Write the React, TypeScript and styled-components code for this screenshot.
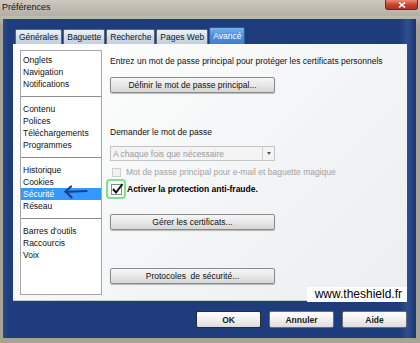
import React from 'react';
import styled, { createGlobalStyle } from 'styled-components';

const GlobalStyle = createGlobalStyle`
  html, body {
    margin: 0;
    padding: 0;
  }
  body {
    width: 420px;
    height: 343px;
    overflow: hidden;
    font-family: "Liberation Sans", Arial, sans-serif;
    font-size: 8px;
  }
`;

const Window = styled.div`
  width: 420px;
  height: 343px;
  display: flex;
  flex-direction: column;
  background: #a8a397;
`;

const TitleBar = styled.div`
  height: 16px;
  display: flex;
  justify-content: space-between;
  align-items: flex-start;
  background: linear-gradient(#cdc9c1, #b4afa5);
`;

const Title = styled.span`
  margin: 2px 0 0 2px;
  font-size: 9px;
  color: #111;
`;

const CloseButton = styled.div`
  width: 31px;
  height: 9px;
  margin-right: 2px;
  border: 1px solid #6b2b22;
  border-top: none;
  border-radius: 0 0 3px 3px;
  background: linear-gradient(#e88b78, #c7402b 55%, #b43322);
  display: flex;
  align-items: center;
  justify-content: center;
`;

const Frame = styled.div`
  flex: 1;
  display: flex;
  padding: 3px 4px 5px 3px;
  background: linear-gradient(#c0bcb3, #a8a397 10px);
`;

const Body = styled.div`
  flex: 1;
  display: flex;
  flex-direction: column;
  background: linear-gradient(90deg, #2a4a8c, #1f3d7c 6px, #1e3c7b 96%, #2d4f90 98%, #1a3470);
  padding: 8px 9px 0 10px;
`;

const Tabs = styled.div`
  display: flex;
  align-items: flex-end;
  gap: 1px;
  margin-left: 2px;
  height: 17px;
`;

const Tab = styled.div<{ $active?: boolean }>`
  height: ${({ $active }) => ($active ? '17px' : '15px')};
  padding: 0 ${({ $active }) => ($active ? '3px' : '3px')};
  box-sizing: border-box;
  display: flex;
  align-items: center;
  font-size: 8.5px;
  border: 1px solid ${({ $active }) => ($active ? '#2a5a9a' : '#55677d')};
  border-bottom: none;
  border-radius: 2px 2px 0 0;
  color: ${({ $active }) => ($active ? '#fff' : '#0c1a2e')};
  background: ${({ $active }) =>
    $active ? 'linear-gradient(#7ab2ec, #4a8fdb 50%, #3d7fcf)' : 'linear-gradient(#eef2f6, #d4dde7 50%, #c3cfdc)'};
`;

const Panel = styled.div`
  position: relative;
  height: 256px;
  display: flex;
  gap: 8px;
  padding: 6px 7px;
  box-sizing: border-box;
  background: linear-gradient(135deg, #ffffff, #f3f4f5 60%, #eceef0);
  box-shadow: 0 1px 0 #c8ccd2;
`;

const NavList = styled.div`
  position: relative;
  width: 82px;
  height: 245px;
  box-sizing: border-box;
  border: 1px solid #a7a7a7;
  background: #fff;
  padding-top: 3px;
`;

const NavItem = styled.div<{ $selected?: boolean }>`
  height: 12px;
  line-height: 12px;
  padding-left: 2px;
  font-size: 8.5px;
  color: ${({ $selected }) => ($selected ? '#fff' : '#111')};
  background: ${({ $selected }) => ($selected ? '#3399ff' : 'transparent')};
`;

const Separator = styled.div`
  height: 1px;
  margin: 6px 0;
  background: #8e8e8e;
`;

const Pointer = styled.svg`
  position: absolute;
  left: 43px;
  top: 134px;
`;

const Content = styled.div`
  display: flex;
  flex-direction: column;
  align-items: flex-start;
`;

const Text = styled.div<{ $top: number; $muted?: boolean }>`
  margin-top: ${({ $top }) => $top}px;
  height: 12px;
  line-height: 12px;
  font-size: 8.5px;
  color: ${({ $muted }) => ($muted ? '#9a9a9a' : '#111')};
`;

const Button = styled.div<{ $top: number }>`
  margin-top: ${({ $top }) => $top}px;
  width: 165px;
  height: 16px;
  box-sizing: border-box;
  display: flex;
  align-items: center;
  justify-content: center;
  font-size: 8.5px;
  color: #111;
  border: 1px solid #8a8a8a;
  border-radius: 2px;
  background: linear-gradient(#f6f6f6, #e8e8e8 50%, #d6d6d6);
  box-shadow: 0 1px 1px rgba(0, 0, 0, 0.25);
`;

const Select = styled.div`
  margin-top: 8px;
  width: 165px;
  height: 15px;
  box-sizing: border-box;
  display: flex;
  align-items: center;
  justify-content: space-between;
  padding-left: 2px;
  border: 1px solid #c4c4c4;
  background: #f4f4f4;
  font-size: 8.5px;
  color: #9a9a9a;
`;

const SelectArrow = styled.div`
  width: 11px;
  height: 13px;
  border-left: 1px solid #d0d0d0;
  display: flex;
  align-items: center;
  justify-content: center;
  &::after {
    content: '';
    border-left: 2.5px solid transparent;
    border-right: 2.5px solid transparent;
    border-top: 3px solid #555;
  }
`;

const CheckRow = styled.div<{ $top: number }>`
  margin-top: ${({ $top }) => $top}px;
  display: flex;
  align-items: center;
  gap: 5px;
`;

const Box = styled.div<{ $disabled?: boolean }>`
  width: 9px;
  height: 9px;
  margin-left: 2px;
  box-sizing: border-box;
  border: 1px solid ${({ $disabled }) => ($disabled ? '#cfcfcf' : '#8f8f8f')};
  background: ${({ $disabled }) => ($disabled ? '#f2f2f2' : '#fff')};
`;

const Highlight = styled.div`
  width: 20px;
  height: 20px;
  margin-left: -4px;
  box-sizing: border-box;
  border: 2px solid #7ee08f;
  border-radius: 4px;
  display: flex;
  align-items: center;
  justify-content: center;
`;

const CheckBox = styled.div`
  width: 11px;
  height: 11px;
  box-sizing: border-box;
  border: 1px solid #8a8a8a;
  background: #fff;
  position: relative;
`;

const CheckMark = styled.svg`
  position: absolute;
  left: -1px;
  top: -3px;
`;

const Label = styled.span<{ $muted?: boolean; $strong?: boolean }>`
  font-size: 8.5px;
  color: ${({ $muted }) => ($muted ? '#a2a2a2' : '#000')};
  font-weight: ${({ $strong }) => ($strong ? 'bold' : 'normal')};
  margin-left: ${({ $strong }) => ($strong ? '-4px' : '0')};
`;

const Watermark = styled.div`
  position: absolute;
  right: 0;
  bottom: -2px;
  padding: 0 5px 0 8px;
  background: #fff;
  font-family: "Liberation Sans", Arial, sans-serif;
  font-size: 12px;
  line-height: 15px;
  color: #000;
`;

const Footer = styled.div`
  display: flex;
  justify-content: flex-end;
  gap: 8px;
  margin-top: 11px;
`;

const FooterButton = styled.div<{ $default?: boolean }>`
  width: 65px;
  height: 17px;
  box-sizing: border-box;
  display: flex;
  align-items: center;
  justify-content: center;
  font-size: 8.5px;
  font-weight: bold;
  color: #1a1a1a;
  border: 1px solid ${({ $default }) => ($default ? '#2c2c2c' : '#6d6d6d')};
  border-radius: 2px;
  background: linear-gradient(#ffffff, #f0f0f0 50%, #dcdcdc);
`;

const groups = [
  ['Onglets', 'Navigation', 'Notifications'],
  ['Contenu', 'Polices', 'Téléchargements', 'Programmes'],
  ['Historique', 'Cookies', 'Sécurité', 'Réseau'],
  ["Barres d'outils", 'Raccourcis', 'Voix'],
];

const tabs = ['Générales', 'Baguette', 'Recherche', 'Pages Web', 'Avancé'];

const App: React.FC = () => (
  <>
    <GlobalStyle />
    <Window>
      <TitleBar>
        <Title>Préférences</Title>
        <CloseButton>
          <svg width="8" height="6" viewBox="0 0 8 6">
            <path d="M1 0.5 L7 5.5 M7 0.5 L1 5.5" stroke="#fff" strokeWidth="1.6" />
          </svg>
        </CloseButton>
      </TitleBar>
      <Frame>
        <Body>
          <Tabs>
            {tabs.map((tab) => (
              <Tab key={tab} $active={tab === 'Avancé'}>
                {tab}
              </Tab>
            ))}
          </Tabs>
          <Panel>
            <NavList>
              {groups.map((group, i) => (
                <React.Fragment key={group[0]}>
                  {i > 0 && <Separator />}
                  {group.map((item) => (
                    <NavItem key={item} $selected={item === 'Sécurité'}>
                      {item}
                    </NavItem>
                  ))}
                </React.Fragment>
              ))}
              <Pointer width="24" height="14" viewBox="0 0 24 14">
                <path
                  d="M7 1.5 C5 3.5 3 5 1.5 6.5 C3.5 8 5.5 10 7.5 12.5 M2 6.8 C8 6.2 15 6.8 22.5 6"
                  fill="none"
                  stroke="#1d3f8e"
                  strokeWidth="2.2"
                  strokeLinecap="round"
                />
              </Pointer>
            </NavList>
            <Content>
              <Text $top={5}>Entrez un mot de passe principal pour protéger les certificats personnels</Text>
              <Button $top={10}>Définir le mot de passe principal...</Button>
              <Text $top={33}>Demander le mot de passe</Text>
              <Select>
                A chaque fois que nécessaire
                <SelectArrow />
              </Select>
              <CheckRow $top={6}>
                <Box $disabled />
                <Label $muted>Mot de passe principal pour e-mail et baguette magique</Label>
              </CheckRow>
              <CheckRow $top={2}>
                <Highlight>
                  <CheckBox>
                    <CheckMark width="13" height="13" viewBox="0 0 13 13">
                      <path d="M2 7 L5 10.5 L11.5 2" fill="none" stroke="#111" strokeWidth="2" />
                    </CheckMark>
                  </CheckBox>
                </Highlight>
                <Label $strong>Activer la protection anti-fraude.</Label>
              </CheckRow>
              <Button $top={15}>Gérer les certificats...</Button>
              <Button $top={38}>Protocoles&nbsp; de sécurité...</Button>
            </Content>
            <Watermark>www.theshield.fr</Watermark>
          </Panel>
          <Footer>
            <FooterButton $default>OK</FooterButton>
            <FooterButton>Annuler</FooterButton>
            <FooterButton>Aide</FooterButton>
          </Footer>
        </Body>
      </Frame>
    </Window>
  </>
);

export default App;
